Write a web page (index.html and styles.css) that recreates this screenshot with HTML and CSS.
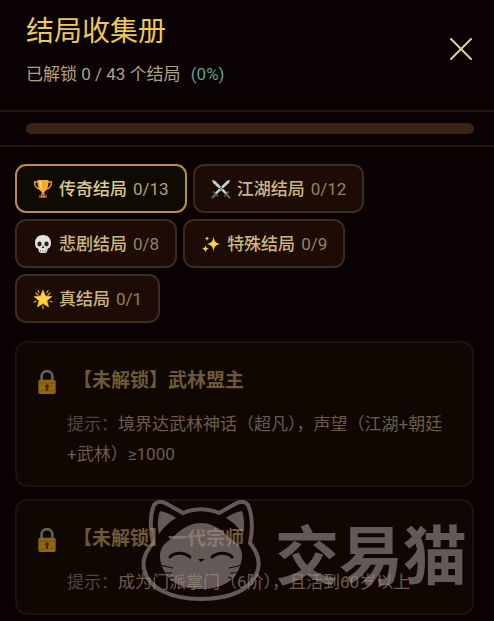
FILE: index.html
```
<!DOCTYPE html>
<html lang="zh-CN">
<head>
    <meta charset="UTF-8">
    <meta name="viewport" content="width=device-width, initial-scale=1.0">
    <title>结局收集册</title>
    <link rel="stylesheet" href="styles.css">
</head>
<body>

    <header class="header">
        <div class="heading">
            <h1>结局收集册</h1>
            <p class="summary">已解锁 0 / 43 个结局 <span class="percent">(0%)</span></p>
        </div>
        <button class="close" aria-label="关闭">
            <svg width="22" height="22" viewBox="0 0 22 22"><path d="M1 1L21 21M21 1L1 21" stroke="currentColor" stroke-width="2" stroke-linecap="round"/></svg>
        </button>
    </header>

    <div class="progress">
        <div class="progress-bar" role="progressbar" aria-label="收集进度" aria-valuemin="0" aria-valuemax="43" aria-valuenow="0"></div>
    </div>

    <main>
        <nav class="tabs">
            <button class="tab active">
                <svg class="icon" viewBox="0 0 20 20">
                    <path d="M5 3H1.500C1.500 7 3 9.500 7 10M15 3h3.500c0 4-1.500 6.500-5.500 7" fill="none" stroke="#e9a12c" stroke-width="1.400"/>
                    <path d="M4.500 1h11c0 6-1 10.500-4.300 12v2.500H8.800V13C5.500 11.500 4.500 7 4.500 1z" fill="#f2ab2f"/>
                    <path d="M6.500 2h2c0 4 .3 7 1.200 9.500C7.500 10 6.600 6 6.500 2z" fill="#ffdc76"/>
                    <path d="M8.500 14h3l.8 2.500H7.700z" fill="#cf7b22"/>
                    <path d="M6 16h8v3H6z" fill="#8b4b2c"/>
                    <path d="M8 17h4v1H8z" fill="#d69a50"/>
                </svg>
                <span>传奇结局</span>
                <span class="count">0/13</span>
            </button>
            <button class="tab">
                <svg class="icon" viewBox="0 0 20 20">
                    <path d="M1 1l3 .8L16.500 14l-1.700 1.700L2 4zM19 1l-3 .8L3.500 14l1.700 1.700L18 4z" fill="#a9c2c2"/>
                    <path d="M1.500 1.500L15.500 15M18.500 1.500L4.500 15" stroke="#e3efeb" stroke-width=".8"/>
                    <path d="M2 12.500l5 5M18 12.500l-5 5" stroke="#55615f" stroke-width="1.300"/>
                    <path d="M4.500 15.500L1.500 18.500M15.500 15.500l3 3" stroke="#70665b" stroke-width="2" stroke-linecap="round"/>
                </svg>
                <span>江湖结局</span>
                <span class="count">0/12</span>
            </button>
            <button class="tab">
                <svg class="icon" viewBox="0 0 20 20">
                    <path d="M10 1c5 0 8 3.300 8 8 0 2.500-.7 4.700-2.800 5.500-.6.300-.8.800-.8 1.700 0 2-1.400 2.800-4.400 2.800s-4.400-.8-4.400-2.800c0-.9-.2-1.400-.8-1.700C2.700 13.700 2 11.500 2 9c0-4.700 3-8 8-8z" fill="#e4e0dc"/>
                    <ellipse cx="6.500" cy="10" rx="2.200" ry="2.400" fill="#292422"/>
                    <ellipse cx="13.500" cy="10" rx="2.200" ry="2.400" fill="#292422"/>
                    <path d="M10 11.500l1.300 2.500H8.700z" fill="#292422"/>
                    <path d="M7.500 16v2M10 16v2.500M12.500 16v2" stroke="#8d8480" stroke-width=".8"/>
                </svg>
                <span>悲剧结局</span>
                <span class="count">0/8</span>
            </button>
            <button class="tab">
                <svg class="icon" viewBox="0 0 20 20" fill="#f7d34b">
                    <path d="M12.500 2c.5 5 1.700 6.800 6.500 8-4.800 1.200-6 3-6.500 8-.5-5-1.700-6.800-6.500-8 4.800-1.200 6-3 6.500-8z"/>
                    <path d="M4.500 11c.3 2.500 1.200 3.300 3.500 3.800-2.300.5-3.200 1.300-3.500 3.800-.3-2.500-1.200-3.300-3.500-3.800 2.300-.5 3.200-1.300 3.500-3.800z"/>
                    <path d="M6 2c.2 1.700.8 2.300 2.500 2.600C6.800 4.900 6.200 5.500 6 7.200 5.800 5.500 5.200 4.900 3.500 4.600 5.200 4.300 5.800 3.700 6 2z"/>
                </svg>
                <span>特殊结局</span>
                <span class="count">0/9</span>
            </button>
            <button class="tab">
                <svg class="icon" viewBox="0 0 20 20">
                    <path d="M3 4l2 2M17 4l-2 2M1 13l2-.7M19 13l-2-.7M10 17v2.500M5 1.500l1 2M15 1.500l-1 2" stroke="#e9952e" stroke-width="1.300" stroke-linecap="round"/>
                    <path d="M10 1l2.500 6 6.500.5-5 4.200 1.600 6.300-5.600-3.400L4.400 18 6 11.700 1 7.500 7.500 7z" fill="#fbd23f" stroke="#f2b52c" stroke-width=".6" stroke-linejoin="round"/>
                </svg>
                <span>真结局</span>
                <span class="count">0/1</span>
            </button>
        </nav>

        <section class="endings">
            <article class="card">
                <svg class="lock" viewBox="0 0 18 24">
                    <path d="M4 12V7a5 5 0 0 1 10 0v5" fill="none" stroke="#64625e" stroke-width="2.400"/>
                    <rect x="1" y="10" width="16" height="13" rx="1.500" fill="#8c6810"/>
                    <path d="M1 13h16M1 20h16" stroke="#79570b"/>
                    <path d="M9 14a2 2 0 0 1 1 3.600V20H8v-2.400A2 2 0 0 1 9 14z" fill="#4c260d"/>
                </svg>
                <div class="card-body">
                    <h2>【未解锁】武林盟主</h2>
                    <p class="hint"><span class="hint-label">提示：</span>境界达武林神话（超凡），声望（江湖+朝廷+武林）≥1000</p>
                </div>
            </article>
            <article class="card">
                <svg class="lock" viewBox="0 0 18 24">
                    <path d="M4 12V7a5 5 0 0 1 10 0v5" fill="none" stroke="#64625e" stroke-width="2.400"/>
                    <rect x="1" y="10" width="16" height="13" rx="1.500" fill="#8c6810"/>
                    <path d="M1 13h16M1 20h16" stroke="#79570b"/>
                    <path d="M9 14a2 2 0 0 1 1 3.600V20H8v-2.400A2 2 0 0 1 9 14z" fill="#4c260d"/>
                </svg>
                <div class="card-body">
                    <h2>【未解锁】一代宗师</h2>
                    <p class="hint"><span class="hint-label">提示：</span>成为门派掌门（6阶），且活到60岁以上</p>
                </div>
                <div class="watermark">
                    <svg width="120" height="102" viewBox="0 0 120 102">
                        <!-- head outline with ears -->
                        <path d="M12 43C9 28 9 14 13 5C16 1 21 1 26 4L42 13C53 8 67 8 78 13L94 4C99 1 104 1 107 5C111 14 112 28 109 43C116 52 119 61 117 69C112 90 89 99 60 99C31 99 7 89 3 69C1 60 5 51 12 43Z" fill="none" stroke="currentColor" stroke-width="4"/>
                        <path d="M18 34C16 25 17 17 19 11C25 12 31 15 35 18C28 22 22 28 18 34ZM102 34C104 25 103 17 101 11C95 12 89 15 85 18C92 22 98 28 102 34Z" fill="currentColor"/>
                        <!-- face, with eyes, nose and whiskers left open -->
                        <mask id="face">
                            <path d="M60 23C77 23 85 36 94 42C101 47 103 56 99 66C94 82 79 89 60 89C41 89 26 82 21 66C17 56 19 47 26 42C35 36 43 23 60 23Z" fill="#fff"/>
                            <path d="M29 57C34 52 43 52 49 57M71 57C77 52 86 52 91 57" fill="none" stroke="#000" stroke-width="3" stroke-linecap="round"/>
                            <path d="M57 59H64L60 62Z" fill="#000"/>
                            <path d="M18 65L32 68M20 73L31 73M24 80L33 77M102 65L88 68M100 73L89 73M96 80L87 77" stroke="#000" stroke-width="1"/>
                        </mask>
                        <rect width="120" height="102" fill="currentColor" mask="url(#face)"/>
                    </svg>
                    <span>交易猫</span>
                </div>
            </article>
        </section>
    </main>

</body>
</html>
```
FILE: styles.css
```
* {
    box-sizing: border-box;
}
body {
    margin: 0;
    background: #0a0202;
    color: #b3a184;
    font-family: Roboto, "Noto Sans CJK SC", sans-serif;
}
h1, h2, p {
    margin: 0;
}
button {
    font-family: inherit;
    cursor: pointer;
}
.header {
    display: flex;
    justify-content: space-between;
    align-items: center;
    padding: 12px 20px 24px 26px;
    border-bottom: 2px solid #211816;
}
h1 {
    font-size: 28px;
    font-weight: 400;
    line-height: 40px;
    color: #ecc858;
}
.summary {
    margin-top: 10px;
    font-size: 17px;
    line-height: 24px;
}
.percent {
    margin-left: 6px;
    color: #5ca286;
}
.close {
    display: flex;
    padding: 2px;
    border: 0;
    background: none;
    color: #dbcf9d;
}
.progress {
    padding: 11px 20px 11px 26px;
    border-bottom: 2px solid #211816;
}
.progress-bar {
    height: 11px;
    border-radius: 6px;
    background: #3b2416;
}
main {
    padding: 17px 20px 6px 15px;
}
.tabs {
    display: flex;
    flex-wrap: wrap;
    gap: 6px;
    /* tabs may run a little wider than the cards */
    margin-right: -10px;
}
.tab {
    display: flex;
    align-items: center;
    gap: 6px;
    height: 49px;
    padding: 0 16px;
    border: 2px solid #3d2b1d;
    border-radius: 11px;
    background: #1c0c05;
    color: #cdb582;
    font-size: 17px;
    font-weight: 500;
    line-height: 24px;
}
.tab.active {
    border-color: #b99045;
    background: #0f0b03;
    color: #ddca8b;
}
.icon {
    width: 20px;
    height: 20px;
}
.count {
    color: #96815c;
    font-weight: 400;
}
.active .count {
    color: #b5a26d;
}
.endings {
    display: flex;
    flex-direction: column;
    gap: 12px;
    margin-top: 18px;
}
.card {
    position: relative;
    display: flex;
    gap: 10px;
    padding: 24px 16px 16px 20px;
    border: 2px solid #1c1210;
    border-radius: 12px;
    background: #100703;
}
.lock {
    flex: none;
    width: 20px;
    height: 26px;
    margin-top: 2px;
}
h2 {
    padding-left: 6px;
    font-size: 19px;
    font-weight: 700;
    line-height: 28px;
    color: #6e5938;
}
.hint {
    margin-top: 14px;
    font-size: 17px;
    line-height: 30px;
    color: #6c5d48;
}
.hint-label {
    color: #51453a;
}
.watermark {
    position: absolute;
    top: -1px;
    left: 124px;
    display: flex;
    align-items: flex-start;
    gap: 14px;
    color: rgba(157, 145, 141, 0.6);
    font-size: 64px;
    font-weight: 700;
    line-height: 116px;
    white-space: nowrap;
    pointer-events: none;
}
```
